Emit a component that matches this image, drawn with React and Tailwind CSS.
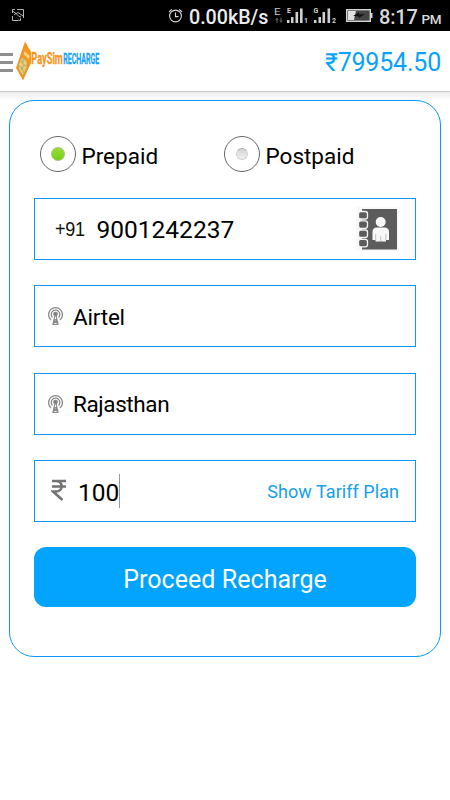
import React from "react";

function StatusBar() {
  return (
    <div className="flex h-[31px] items-center bg-black text-[#e4e4e4]">
      <svg className="ml-[11px] h-[15px] w-[14px]" viewBox="0 0 14 15" fill="none" stroke="#b5b5b5" strokeWidth="1">
        <path d="M4 1.5H1.5V5M6 1.5H12.5V10M1.5 8V12.5H7M1.5 3L5 5.5L7 4.5L12 8M3 7L5 5.5L8 8.5L10 9M7 12L9.5 12.5V10.5" />
      </svg>
      <svg className="ml-[143px] h-[16px] w-[15px]" viewBox="0 0 15 16" fill="none" stroke="#d8d8d8" strokeWidth="1.1">
        <circle cx="7.5" cy="8" r="5.9" />
        <path d="M7.5 4.5V8.600H10.500M1 4L3.800 1.300M14 4L11.200 1.300" />
      </svg>
      <span className="mt-[3px] ml-[6px] w-[85px] text-[19.700px] leading-[31px] font-medium tracking-[-0.020px] whitespace-nowrap text-[#ececec]">0.00kB/s</span>
      <svg className="h-[31px] w-[65px]" viewBox="0 0 65 31" fill="#d0d0d0">
        <text transform="translate(0 15) scale(1.300 1)" fontSize="9" fontFamily="Roboto, sans-serif" fill="#c4c4c4">E</text>
        <path d="M3 17.500L5 20H3.600V23H2.400V20H1ZM7 23L5 20.500H6.400V17.500H7.600V20.500H9Z" fill="#555" />
        <text x="13" y="13" fontSize="7" fontWeight="700" fontFamily="Roboto, sans-serif">E</text>
        <path d="M13 20h2.500v3H13zM17 17h2.500v6H17zM21.500 12h2.600v11h-2.600zM26 8.500h2.600V23h-2.600z" />
        <text x="30" y="23" fontSize="7" fontWeight="700" fontFamily="Roboto, sans-serif">1</text>
        <text x="39.500" y="13" fontSize="7" fontWeight="700" fontFamily="Roboto, sans-serif">G</text>
        <path d="M40 20h2.500v3H40zM44.500 17H47v6h-2.500zM48.500 12h2.600v11h-2.600zM53.500 8.500h2.600V23h-2.600z" />
        <text x="58" y="23" fontSize="7" fontWeight="700" fontFamily="Roboto, sans-serif">2</text>
      </svg>
      <svg className="ml-[7px] h-[13px] w-[27px]" viewBox="0 0 27 13">
        <rect x=".7" y=".7" width="23.600" height="11.600" fill="#444" stroke="#d4d4d4" strokeWidth="1.400" />
        <rect x="24.500" y="4" width="2" height="5" fill="#d4d4d4" />
        <path d="M2 2H10L8 11H2Z" fill="#e0e0e0" />
        <path d="M7 7L13 3.500V5.500L19 5L13 9V7.500Z" fill="#111" />
      </svg>
      <span className="mt-[3px] ml-[6px] text-[20px] leading-[31px] font-medium tracking-[-0.200px] whitespace-nowrap text-[#d9d9d9]">8:17</span>
      <span className="mt-[6px] ml-[4px] text-[13.500px] leading-[20px] font-medium tracking-[-0.400px] text-[#d9d9d9]">PM</span>
    </div>
  );
}

function Logo() {
  return (
    <svg className="ml-[3px] h-[44px] w-[90px]" viewBox="0 0 90 44">
      <path d="M9 2.500L15 13V24L7 41.500L0 29Z" fill="#f7941d" />
      <path d="M8.500 12L14 17L12.500 20L7.500 15Z" fill="#ffd18b" />
      <path d="M6 18L11 22V28L7 37L2.500 30V25Z" fill="#e3ce7d" stroke="#b99c45" strokeWidth=".6" />
      <path d="M5 22L8 26L5 31M8 26L10.500 27M3 27L6 29L8 34M7 20V24" stroke="#b09a50" strokeWidth=".7" fill="none" />
      <text transform="translate(15.300 24.800) scale(.585 1)" fontSize="15.800" fontWeight="700" fontFamily="Roboto, sans-serif" fill="#f7941d" stroke="#f7941d" strokeWidth=".3">PaySim</text>
      <text transform="translate(47.200 25.300) scale(.510 1)" fontSize="13.800" fontWeight="700" fontFamily="Roboto, sans-serif" fill="#16a3f5" stroke="#16a3f5" strokeWidth=".3">RECHARGE</text>
    </svg>
  );
}

function Header() {
  return (
    <header className="flex h-[61px] items-center border-b border-[#c8c8c8] bg-white">
      <div className="mt-[2px] flex w-[13px] flex-col gap-[5px]">
        <div className="h-[3px] bg-[#8e8e8e]" />
        <div className="h-[3px] bg-[#8e8e8e]" />
        <div className="h-[3px] bg-[#8e8e8e]" />
      </div>
      <Logo />
      <span className="mt-[4px] mr-[9px] ml-auto text-[25px] leading-[30px] tracking-[-0.200px] text-[#08a2fa]">₹79954.50</span>
    </header>
  );
}

function Radio({ label, selected }) {
  return (
    <label className="flex w-[184px] items-center">
      <span className="flex h-[36px] w-[36px] items-center justify-center rounded-full border-[1.500px] border-[#666]">
        {selected ? (
          <span className="h-[14px] w-[14px] rounded-full border border-[#a6bf84] bg-linear-to-b from-[#9add38] to-[#75cf07]" />
        ) : (
          <span className="h-[12px] w-[12px] rounded-full border border-[#d0d0d0] border-t-[#aaa] bg-linear-to-b from-[#d4d4d4] to-[#f0f0f0]" />
        )}
      </span>
      <span className="mt-[4px] ml-[5.500px] text-[22.500px] leading-[28px]">{label}</span>
    </label>
  );
}

function Field({ children }) {
  return <div className="flex h-[62px] items-center border border-[#0b97f5]">{children}</div>;
}

function ContactBook() {
  return (
    <svg className="mr-[16px] ml-auto h-[44px] w-[43px]" viewBox="0 0 43 44">
      <rect width="43" height="44" fill="#f9f9f9" />
      <rect x="6" y="2" width="35" height="40.500" fill="#5c5c5c" />
      {[4.500, 13.800, 23, 32.300].map((y) => (
        <rect key={y} x="2.500" y={y} width="9" height="7.500" rx="2.200" fill="#5c5c5c" stroke="#f4f4f4" strokeWidth="1.300" />
      ))}
      <circle cx="24.700" cy="15" r="5" fill="#f7f7f7" />
      <path d="M16.500 33V25Q16.500 20.500 21 20.500H28.500Q33 20.500 33 25V33H30V34.500H19.500V33Z" fill="#f7f7f7" />
      <path d="M19.700 27V33M29.800 27V33M24.700 29V34.500" stroke="#aaa" strokeWidth=".7" />
    </svg>
  );
}

function Tower() {
  return (
    <svg className="ml-[12px] h-[20px] w-[17px]" viewBox="0 0 17 20" fill="none" stroke="#8a8a8a" strokeWidth="1.300">
      <path d="M4 14A7 7 0 1 1 13 14" />
      <path d="M5.500 11.500A4.300 4.300 0 1 1 11.500 11.500" />
      <circle cx="8.500" cy="8" r="1.700" fill="#777" />
      <path d="M8 9L6 18.500H11L9 9M7 14L10.500 17.500M10 14L6.500 17.500M7 13.500H10" strokeWidth="1.200" />
    </svg>
  );
}

export default function App() {
  return (
    <div className="min-h-[800px] w-[450px] overflow-hidden bg-white font-['Roboto',sans-serif] text-black">
      <StatusBar />
      <Header />
      <div className="h-[8px] bg-linear-to-b from-[#ececec] to-[#fdfdfd]" />
      <main className="mx-[9px] flex h-[557px] flex-col rounded-[25px] border border-[#0b97f5] px-[24px]">
        <div className="mt-[35px] ml-[6px] flex h-[36px]">
          <Radio label="Prepaid" selected />
          <Radio label="Postpaid" />
        </div>
        <div className="mt-[26px] flex flex-col gap-[25.300px]">
          <Field>
            <span className="ml-[20px] w-[42px] origin-left scale-x-90 font-['Liberation_Sans',sans-serif] text-[20px] leading-[24px] tracking-[-0.300px] text-[#111]">+91</span>
            <span className="mt-[2px] ml-[-0.500px] text-[24.500px] leading-[30px]">9001242237</span>
            <ContactBook />
          </Field>
          <Field>
            <Tower />
            <span className="mt-[2px] ml-[9px] text-[22.500px] leading-[28px] tracking-[-0.200px]">Airtel</span>
          </Field>
          <Field>
            <Tower />
            <span className="mt-px ml-[9px] text-[22.500px] leading-[28px] tracking-[-0.400px]">Rajasthan</span>
          </Field>
          <Field>
            <svg className="mb-[2px] ml-[16px] h-[22px] w-[16px]" viewBox="0 0 16 22" fill="none" stroke="#747474" strokeWidth="2.600">
              <path d="M1 2H15M1 7.500H15M1 2H5C12.500 2 12.500 12.500 5 12.500H2L11.500 21" />
            </svg>
            <span className="mt-[4px] ml-[11px] text-[24.500px] leading-[30px]">100</span>
            <span className="h-[34px] w-px bg-[#999]" />
            <span className="mt-[2px] mr-[16px] ml-auto text-[18px] leading-[24px] tracking-[0.050px] text-[#149fee]">Show Tariff Plan</span>
          </Field>
          <button className="h-[60px] rounded-[12px] bg-[#03a4fd] pt-[5px] text-[25px] leading-[30px] tracking-[0.050px] text-white">
            Proceed Recharge
          </button>
        </div>
      </main>
    </div>
  );
}
